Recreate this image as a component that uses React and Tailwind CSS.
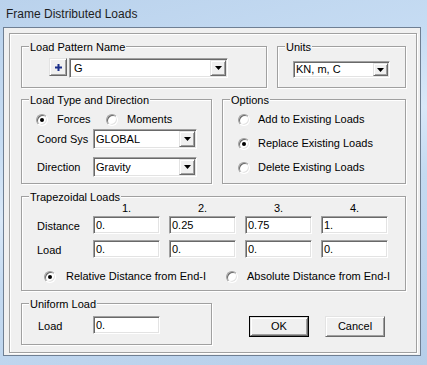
import React from 'react';

// classic 3D edges
const sunken =
  'border border-t-[#a0a0a0] border-l-[#a0a0a0] border-r-white border-b-white shadow-[inset_1px_1px_0_#696969,inset_-1px_-1px_0_#e3e3e3]';
const raised =
  'border border-t-[#e3e3e3] border-l-[#e3e3e3] border-r-[#696969] border-b-[#696969] shadow-[inset_1px_1px_0_#ffffff,inset_-1px_-1px_0_#a0a0a0] bg-[#f0f0f0]';
const etched = 'border border-[#a0a0a0] shadow-[inset_1px_1px_0_#ffffff,1px_1px_0_#ffffff]';

const Group = ({ label, className, children }) => (
  <div className={`${etched} ${className}`}>
    <div className="-mt-[6px] ml-[7px] w-fit bg-[#f0f0f0] px-[1px] leading-[13px]">{label}</div>
    {children}
  </div>
);

const Arrow = () => (
  <svg width="7" height="4" viewBox="0 0 7 4">
    <path d="M0 0h7L3.5 4z" fill="#000" />
  </svg>
);

const Combo = ({ value, className, btn = 'w-[16px]', pad = 'pl-[1px]' }) => (
  <div className={`${sunken} flex bg-white p-[1px] ${className}`}>
    <span className={`flex flex-1 items-center leading-[13px] ${pad}`}>{value}</span>
    <span className={`${raised} flex h-full items-center justify-center ${btn}`}>
      <Arrow />
    </span>
  </div>
);

const Field = ({ value, className = 'w-[67px]' }) => (
  <div className={`${sunken} flex h-[18px] items-center bg-white pl-[2px] leading-[13px] ${className}`}>
    {value}
  </div>
);

const Radio = ({ checked }) => (
  <span className="flex h-[12px] w-[12px] shrink-0 items-center justify-center rounded-full border border-t-[#a0a0a0] border-l-[#a0a0a0] border-r-white border-b-white bg-white shadow-[inset_1px_1px_0_#696969,inset_-1px_-1px_0_#e3e3e3]">
    {checked && <span className="h-[4px] w-[4px] rounded-full bg-black" />}
  </span>
);

const Option = ({ label, checked, className = '', gap = 'gap-[9px]' }) => (
  <div className={`flex h-[13px] items-center leading-[13px] ${gap} ${className}`}>
    <Radio checked={checked} />
    <span>{label}</span>
  </div>
);

export default function App() {
  return (
    <div className="flex h-[365px] w-[427px] flex-col bg-[linear-gradient(165deg,#bad2ec_0%,#c6dcf3_30%,#d9e8f8_46%,#c4daf1_60%,#b6cee9_100%)] font-['Liberation_Sans',Arial,sans-serif] text-[11px] text-black">
      {/* title bar */}
      <div className="flex h-[27px] items-center pl-[6px] text-[12px] leading-[14px] text-[#1e1e1e]">
        Frame Distributed Loads
      </div>

      <div className="ml-[3px] h-[329px] w-[418px] border border-[#6f7f93] bg-[#f0f0f0] pl-[5px] pt-[5px]">
        <div className={`${etched} h-[320px] w-[408px] pl-[11px] pt-[12px]`}>
          {/* pattern + units */}
          <div className="flex gap-[10px]">
            <Group label="Load Pattern Name" className="h-[42px] w-[246px]">
              <div className="ml-[27px] mt-[4px] flex items-start gap-[2px]">
                <span className={`${raised} flex h-[18px] w-[18px] items-center justify-center`}>
                  <svg width="7" height="7" viewBox="0 0 7 7">
                    <path d="M2.5 0h2v2.5H7v2H4.5V7h-2V4.5H0v-2h2.5z" fill="#1b2f8a" />
                  </svg>
                </span>
                <Combo value="G" className="h-[20px] w-[159px]" pad="pl-[3px]" />
              </div>
            </Group>
            <Group label="Units" className="h-[42px] w-[129px]">
              <div className="ml-[15px] mt-[7px]">
                <Combo value="KN, m, C" className="h-[17px] w-[97px]" btn="w-[15px]" />
              </div>
            </Group>
          </div>

          {/* load type + options */}
          <div className="mt-[11px] flex gap-[10px]">
            <Group label="Load Type and Direction" className="h-[85px] w-[191px]">
              <div className="ml-[14px] mt-[6px] flex">
                <Option label="Forces" checked className="w-[70px]" />
                <Option label="Moments" />
              </div>
              <div className="ml-[15px] mt-[3px] flex items-center">
                <span className="w-[56px] leading-[13px]">Coord Sys</span>
                <Combo value="GLOBAL" className="h-[20px] w-[104px]" />
              </div>
              <div className="ml-[15px] mt-[8px] flex items-center">
                <span className="w-[56px] leading-[13px]">Direction</span>
                <Combo value="Gravity" className="h-[20px] w-[104px]" />
              </div>
            </Group>
            <Group label="Options" className="h-[85px] w-[184px]">
              <div className="ml-[15px] flex flex-col">
                <Option label="Add to Existing Loads" gap="gap-[8px]" className="mt-[6px]" />
                <Option label="Replace Existing Loads" checked gap="gap-[8px]" className="mt-[11px]" />
                <Option label="Delete Existing Loads" gap="gap-[8px]" className="mt-[11px]" />
              </div>
            </Group>
          </div>

          {/* trapezoidal */}
          <Group label="Trapezoidal Loads" className="mt-[12px] h-[95px] w-[385px]">
            <div className="-mt-[2px] ml-[71px] flex gap-[9px] leading-[13px]">
              {['1.', '2.', '3.', '4.'].map((n) => (
                <span key={n} className="w-[67px] text-center">
                  {n}
                </span>
              ))}
            </div>
            <div className="ml-[15px] mt-[1px] flex items-center gap-[9px]">
              <span className="-mr-[9px] w-[56px] pt-[3px] leading-[13px]">Distance</span>
              <Field value="0." />
              <Field value="0.25" />
              <Field value="0.75" />
              <Field value="1." />
            </div>
            <div className="ml-[15px] mt-[6px] flex items-center gap-[9px]">
              <span className="-mr-[9px] w-[56px] pt-[3px] leading-[13px]">Load</span>
              <Field value="0." />
              <Field value="0." />
              <Field value="0." />
              <Field value="0." />
            </div>
            <div className="ml-[22px] mt-[12px] flex">
              <Option label="Relative Distance from End-I" checked gap="gap-[10px]" className="w-[182px]" />
              <Option label="Absolute Distance from End-I" gap="gap-[9px]" />
            </div>
          </Group>

          {/* uniform + buttons */}
          <div className="mt-[12px] flex items-start">
            <Group label="Uniform Load" className="h-[42px] w-[191px]">
              <div className="ml-[16px] mt-[5px] flex items-center">
                <span className="w-[55px] pt-[3px] leading-[13px]">Load</span>
                <Field value="0." />
              </div>
            </Group>
            <div className="ml-[37px] mt-[13px] flex gap-[16px]">
              <button className="h-[21px] w-[60px] border border-black p-0">
                <span className={`${raised} flex h-full w-full items-center justify-center leading-[13px]`}>OK</span>
              </button>
              <button className={`${raised} flex h-[21px] w-[60px] items-center justify-center leading-[13px]`}>
                Cancel
              </button>
            </div>
          </div>
        </div>
      </div>
    </div>
  );
}
